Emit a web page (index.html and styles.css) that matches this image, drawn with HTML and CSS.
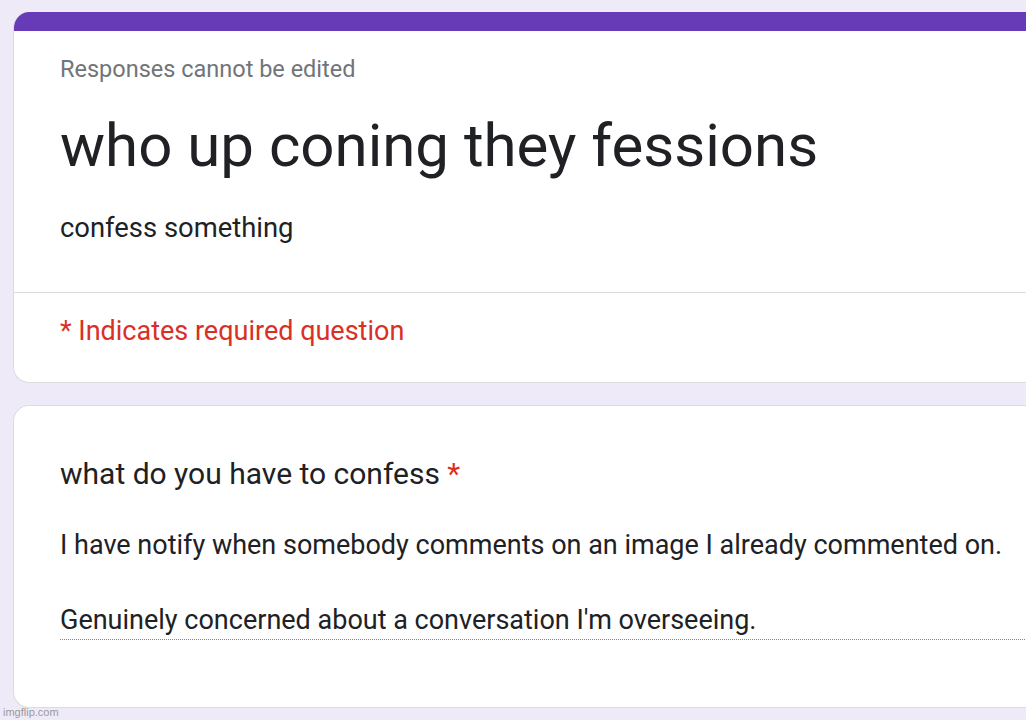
FILE: index.html
```html
<!DOCTYPE html>
<html>
<head>
<meta charset="utf-8">
<link rel="stylesheet" href="styles.css">
</head>
<body>
<div class="page">
  <div class="card header-card">
    <div class="topbar"></div>
    <div class="header-main">
      <div class="note">Responses cannot be edited</div>
      <h1 class="title">who up coning they fessions</h1>
      <div class="desc">confess something</div>
    </div>
    <div class="required-row">* Indicates required question</div>
  </div>
  <div class="card question-card">
    <div class="question">what do you have to confess <span class="star">*</span></div>
    <div class="answer">
      <div class="line">I have notify when somebody comments on an image I already commented on.</div>
      <div class="blank"></div>
      <div class="line">Genuinely concerned about a conversation I'm overseeing.</div>
    </div>
  </div>
</div>
<div class="watermark">imgflip.com</div>
</body>
</html>
```
FILE: styles.css
```css
html, body {
  margin: 0;
  padding: 0;
}
body {
  background: #efeaf7;
  font-family: Roboto, "Liberation Sans", Arial, sans-serif;
  width: 1026px;
  height: 720px;
  overflow: hidden;
  position: relative;
}
.page {
  padding: 12px 0 0 13px;
  display: flex;
  flex-direction: column;
  gap: 22px;
}
.card {
  background: #fff;
  border: 1px solid #dadce0;
  border-right: none;
  border-radius: 16px 0 0 16px;
  width: 1020px;
  box-sizing: border-box;
}
.header-card {
  overflow: hidden;
  height: 371px;
  border-top: none;
}
.topbar {
  height: 19px;
  background: #673ab7;
}
.header-main {
  padding: 25px 0 0 46px;
  height: 262px;
  box-sizing: border-box;
  border-bottom: 1px solid #dadce0;
}
.note {
  font-size: 23.5px;
  color: #70757a;
  line-height: 27.5px;
}
.title {
  margin: 27.5px 0 0 0;
  font-size: 60px;
  font-weight: 400;
  color: #202124;
  line-height: 70.3px;
}
.desc {
  margin-top: 31px;
  font-size: 27.4px;
  color: #202124;
  line-height: 32px;
}
.required-row {
  padding: 23px 0 0 46px;
  font-size: 27px;
  color: #d93025;
  line-height: 31.6px;
}
.question-card {
  height: 303px;
  padding: 50px 0 0 46px;
}
.question {
  font-size: 30px;
  color: #202124;
  line-height: 35.2px;
}
.star {
  color: #d93025;
}
.answer {
  margin-top: 35.6px;
  border-bottom: 1px dotted #80868b;
  padding-bottom: 0;
  font-size: 27px;
  color: #202124;
  line-height: 37.5px;
}
.blank {
  height: 37.5px;
}
.watermark {
  position: absolute;
  left: 3px;
  bottom: 2px;
  font-family: "Liberation Sans", Arial, sans-serif;
  font-size: 11px;
  color: #9a9aa0;
}
```
